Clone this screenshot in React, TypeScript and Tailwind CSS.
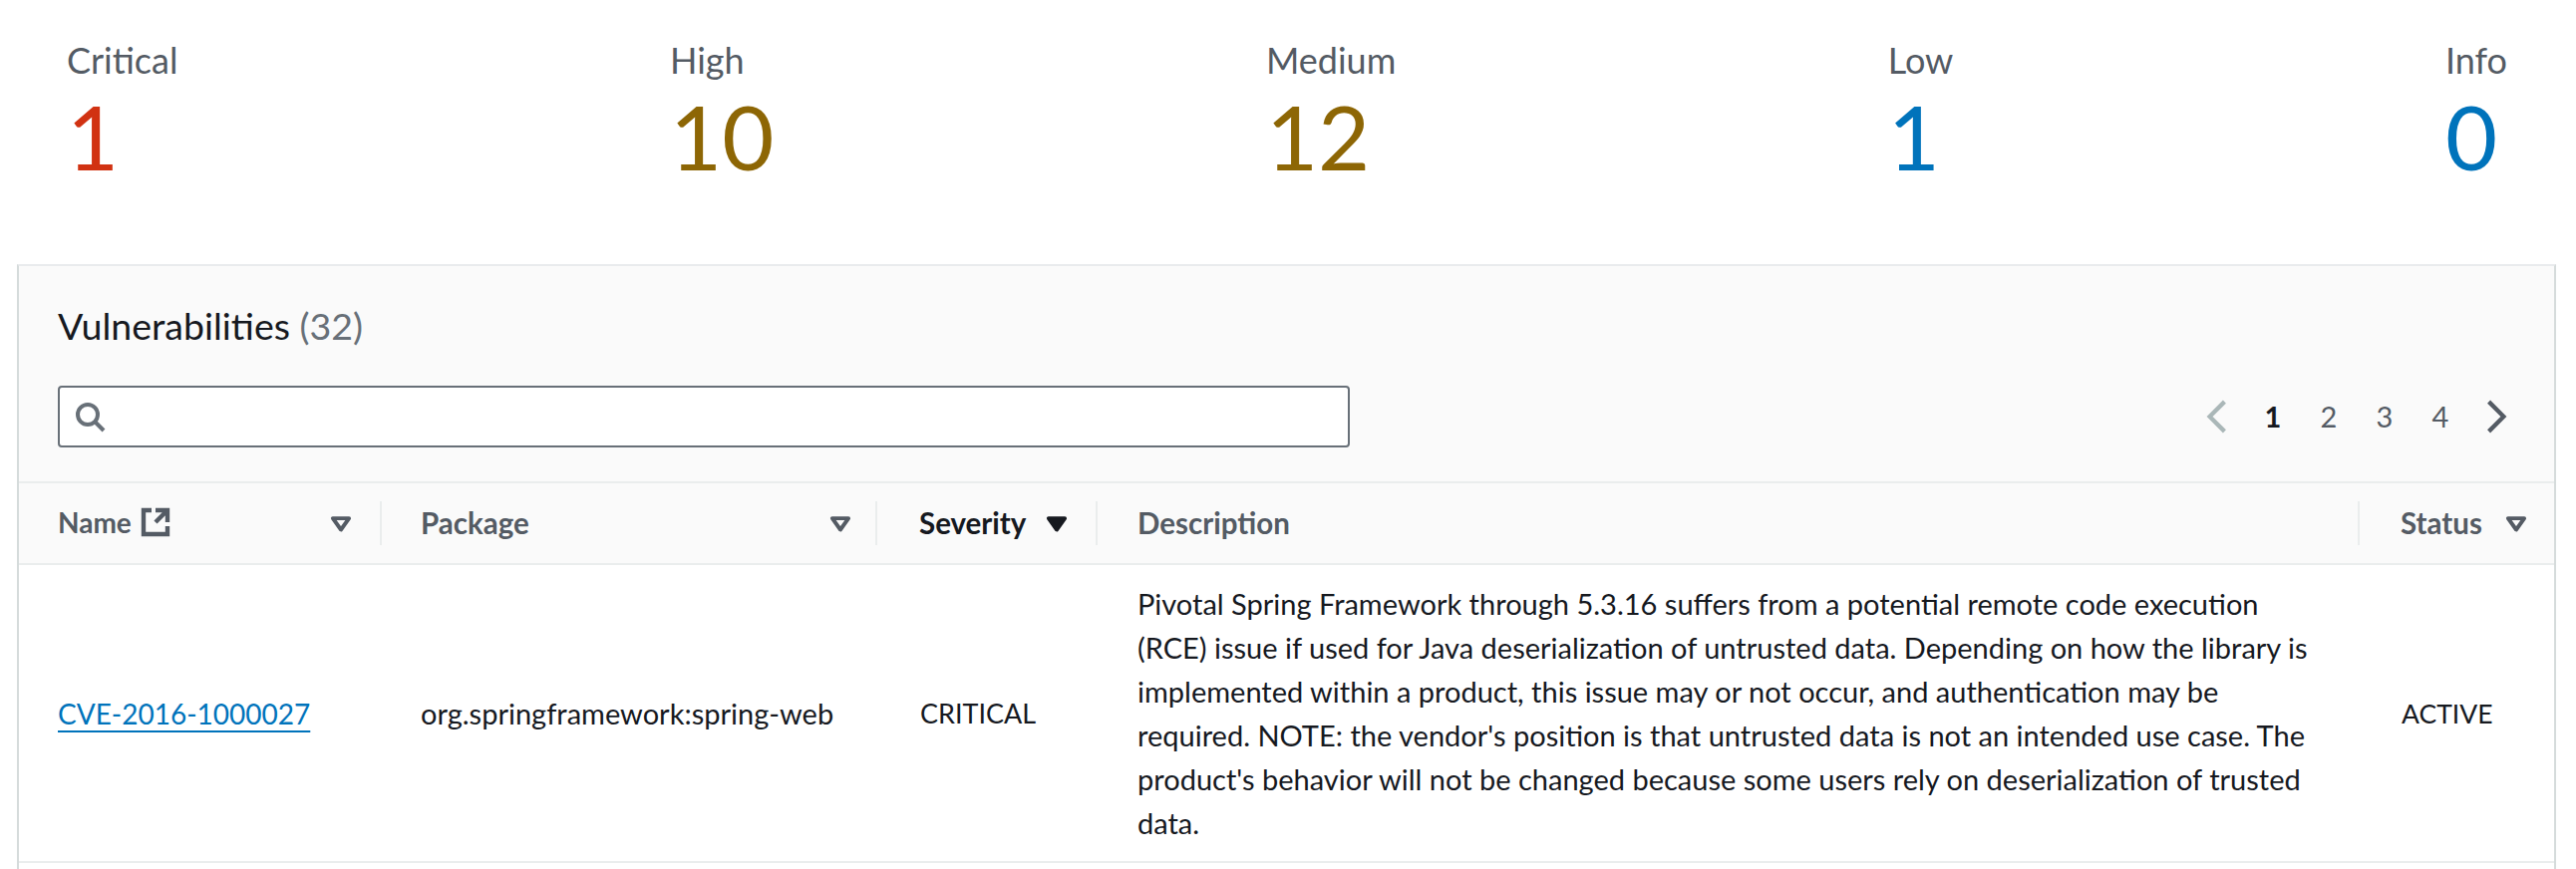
const font = "[font-family:Lato,'Open_Sans',sans-serif]";

function Stat({ label, value, color }: { label: string; value: string; color: string }) {
  return (
    <div className="flex flex-col">
      <div className="text-[36px] leading-[44px] text-[#545b64]">{label}</div>
      <div className={`text-[90px] leading-[108px] ${color}`}>{value}</div>
    </div>
  );
}

function Caret({ filled }: { filled?: boolean }) {
  return (
    <svg viewBox="0 0 16 16" className={`w-[26px] h-[26px] shrink-0 ${filled ? "text-[#16191f]" : "text-[#545b64]"}`} fill={filled ? "currentColor" : "none"} stroke="currentColor" strokeWidth="2.4" strokeLinejoin="round">
      <path d="M3 5h10l-5 7z" />
    </svg>
  );
}

const Sep = () => <div className="w-[2px] h-[44px] bg-[#eaeded] shrink-0" />;

export default function App() {
  return (
    <div className={`w-[2584px] h-[872px] bg-white overflow-hidden ${font}`}>
      <div className="flex justify-between pl-[67px] pr-[69px] pt-[38px] h-[265px]">
        <Stat label="Critical" value="1" color="text-[#d13212]" />
        <Stat label="High" value="10" color="text-[#8d6605]" />
        <Stat label="Medium" value="12" color="text-[#8d6605]" />
        <Stat label="Low" value="1" color="text-[#0073bb]" />
        <Stat label="Info" value="0" color="text-[#0073bb]" />
      </div>

      <div className="ml-[17px] w-[2547px] border-t-2 border-t-[#e9ebed] border-x-2 border-x-[#d5dbdb] bg-white h-[607px]">
        <div className="bg-[#fafafa] h-[218px] border-b-2 border-[#eaeded] pl-[39px] pr-[41px] pt-[30px]">
          <div className="text-[37.5px] leading-[60px] text-[#16191f]">
            Vulnerabilities <span className="text-[#687078]">(32)</span>
          </div>
          <div className="flex items-center justify-between mt-[30px]">
            <div className="w-[1296px] h-[62px] bg-white border-2 border-[#687078] rounded-[4px] flex items-center pl-[14px]">
              <svg viewBox="0 0 16 16" className="w-[32px] h-[32px] text-[#687078]" fill="none" stroke="currentColor" strokeWidth="2">
                <circle cx="7" cy="7" r="5" />
                <path d="M15 15l-4.5-4.5" />
              </svg>
            </div>
            <div className="flex items-center gap-[22px] text-[29px] text-[#545b64]">
              <svg viewBox="0 0 16 16" className="w-[34px] h-[34px] text-[#aab7b8]" fill="none" stroke="currentColor" strokeWidth="2">
                <path d="M11.5 1L4.5 8l7 7" />
              </svg>
              <span className="w-[34px] text-center font-bold text-[#16191f]">1</span>
              <span className="w-[34px] text-center">2</span>
              <span className="w-[34px] text-center">3</span>
              <span className="w-[34px] text-center">4</span>
              <svg viewBox="0 0 16 16" className="w-[34px] h-[34px]" fill="none" stroke="currentColor" strokeWidth="2">
                <path d="M4.5 1l7 7-7 7" />
              </svg>
            </div>
          </div>
        </div>

        <div className="bg-[#fafafa] h-[82px] border-b-2 border-[#eaeded] flex items-center font-bold text-[29.5px] text-[#545b64]">
          <div className="w-[362px] pl-[39px] pr-[26px] shrink-0 flex items-center justify-between">
            <div className="flex items-center gap-[8px] text-[28px] -mt-[2px]">
              Name
              <svg viewBox="0 0 16 16" className="w-[32px] h-[32px]" fill="none" stroke="currentColor" strokeWidth="2.2">
                <path d="M14 8V2H8M14 2L8 8M6 2H2v12h12v-4" />
              </svg>
            </div>
            <Caret />
          </div>
          <Sep />
          <div className="w-[495px] pl-[39px] pr-[22px] shrink-0 flex items-center justify-between">
            Package
            <Caret />
          </div>
          <Sep />
          <div className="w-[219px] pl-[42px] pr-[26px] shrink-0 flex items-center justify-between text-[#16191f]">
            Severity
            <Caret filled />
          </div>
          <Sep />
          <div className="w-[1264px] pl-[40px] shrink-0">Description</div>
          <Sep />
          <div className="flex-1 pl-[41px] pr-[25px] flex items-center justify-between">
            Status
            <Caret />
          </div>
        </div>

        <div className="h-[299px] border-b-2 border-[#eaeded] flex items-center text-[29px] text-[#16191f]">
          <div className="w-[364px] pl-[39px] shrink-0 text-[28px]">
            <a className="text-[#0073bb] underline underline-offset-[6px] decoration-2">CVE-2016-1000027</a>
          </div>
          <div className="w-[497px] pl-[39px] shrink-0">org.springframework:spring-web</div>
          <div className="w-[221px] pl-[43px] pt-[2px] shrink-0 text-[27px]">CRITICAL</div>
          <div className="w-[1266px] pl-[40px] pr-[41px] shrink-0 leading-[44px]">
            Pivotal Spring Framework through 5.3.16 suffers from a potential remote code execution (RCE) issue if used for Java deserialization of untrusted data. Depending on how the library is implemented within a product, this issue may or not occur, and authentication may be required. NOTE: the vendor's position is that untrusted data is not an intended use case. The product's behavior will not be changed because some users rely on deserialization of trusted data.
          </div>
          <div className="pl-[42px] pt-[2px] text-[26.5px]">ACTIVE</div>
        </div>
      </div>
    </div>
  );
}
